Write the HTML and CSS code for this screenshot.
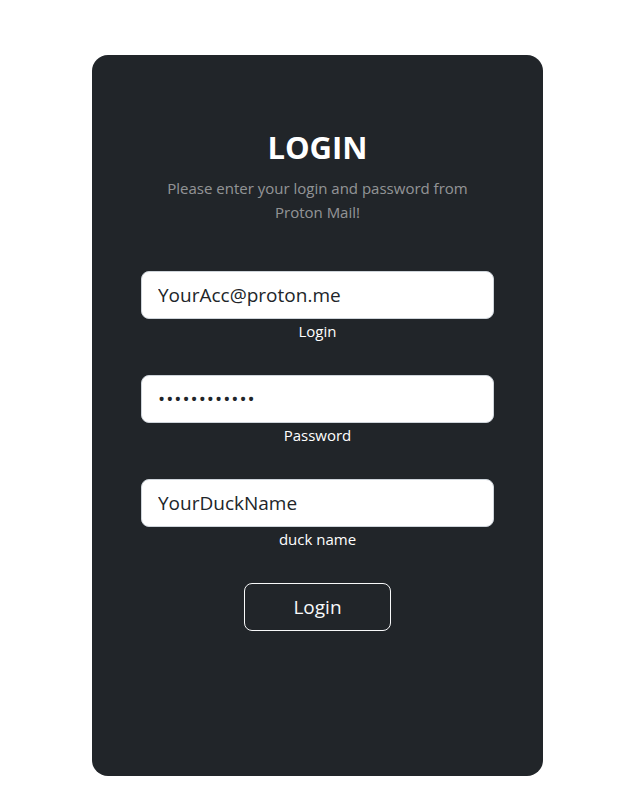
FILE: index.html
```html
<!DOCTYPE html>
<html lang="en">
<head>
<meta charset="utf-8">
<title>Login</title>
<link rel="stylesheet" href="styles.css">
</head>
<body>
<div class="page">
  <section class="card">
    <div class="card-body">
      <h2 class="title">LOGIN</h2>
      <p class="subtitle">Please enter your login and password from Proton Mail!</p>

      <div class="field">
        <input class="input" type="email" id="login" value="YourAcc@proton.me">
        <label class="label" for="login">Login</label>
      </div>
      <div class="field">
        <input class="input input-password" type="password" id="password" value="............">
        <label class="label" for="password">Password</label>
      </div>
      <div class="field">
        <input class="input" type="text" id="duck" value="YourDuckName">
        <label class="label" for="duck">duck name</label>
      </div>

      <button class="btn" type="button">Login</button>
    </div>
  </section>
</div>
</body>
</html>
```

FILE: styles.css
```css
* { box-sizing: border-box; }

html, body {
  margin: 0;
  padding: 0;
  background: #ffffff;
}

body {
  font-family: "Segoe UI", "Open Sans", "Noto Sans", sans-serif;
  color: #212529;
}

.page {
  padding: 55px 0 36px 92px;
}

.card {
  width: 451px;
  height: 721px;
  background: #212529;
  border-radius: 16px;
  color: #ffffff;
}

.card-body {
  padding: 72px 49px 48px;
  display: flex;
  flex-direction: column;
  align-items: center;
  text-align: center;
}

.title {
  margin: 0 0 8px;
  font-size: 31px;
  line-height: 41px;
  font-weight: 700;
  color: #ffffff;
}

.subtitle {
  max-width: 315px;
  margin: 0 0 47px;
  font-size: 15px;
  line-height: 24px;
  color: rgba(255, 255, 255, 0.52);
}

.field {
  display: flex;
  flex-direction: column;
  align-self: stretch;
  margin-bottom: 24px;
}

.input {
  display: block;
  width: 100%;
  height: 48px;
  padding: 8px 16px;
  font-family: inherit;
  font-size: 19px;
  line-height: 30px;
  color: #212529;
  background: #ffffff;
  border: 1px solid #ced4da;
  border-radius: 8px;
  outline: none;
}

.input-password {
  letter-spacing: 1px;
}

.label {
  display: block;
  margin-bottom: 8px;
  font-size: 15px;
  line-height: 24px;
  color: #ffffff;
}

.btn {
  display: inline-block;
  height: 48px;
  padding: 0 48px;
  font-family: inherit;
  font-size: 19px;
  line-height: 30px;
  color: #f8f9fa;
  background: transparent;
  border: 1px solid #f8f9fa;
  border-radius: 8px;
}
```
